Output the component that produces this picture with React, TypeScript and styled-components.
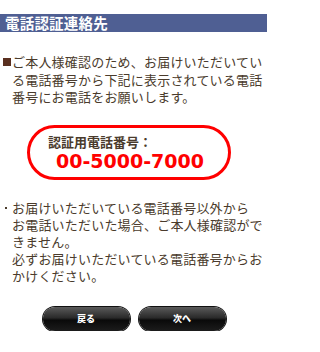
import React from 'react';
import styled, { createGlobalStyle } from 'styled-components';

const GlobalStyle = createGlobalStyle`
  body {
    margin: 0;
    background: #fff;
    font-family: "Noto Sans CJK JP", "Noto Sans", sans-serif;
    color: #4a3b2c;
  }
`;

const Page = styled.div`
  width: 267px;
  padding-top: 14px;
`;

const TitleBar = styled.h1`
  margin: 0;
  height: 18px;
  line-height: 18px;
  padding-left: 5px;
  background: #4f5f93;
  color: #fff;
  font-size: 14.5px;
  font-weight: bold;
  letter-spacing: 0.2px;
`;

const Notice = styled.div<{ $top: number }>`
  display: flex;
  align-items: flex-start;
  margin-top: ${p => p.$top}px;
  padding-left: 3px;
`;

const Square = styled.span`
  flex: none;
  width: 8px;
  height: 8px;
  margin-top: 5px;
  margin-right: 1px;
  background: #5a3020;
`;

const Dot = styled.span`
  flex: none;
  width: 2px;
  height: 2px;
  margin: 8px 5px 0 2px;
  background: #4a3b2c;
`;

const Text = styled.p<{ $lh: number }>`
  margin: 0;
  width: 253px;
  font-size: 13px;
  line-height: ${p => p.$lh}px;
  letter-spacing: 0.2px;
`;

const PhoneBox = styled.div`
  box-sizing: border-box;
  width: 204px;
  height: 55px;
  margin: 19px 0 0 27px;
  border: 3px solid #f00;
  border-radius: 28px;
  padding-top: 5px;
`;

const PhoneLabel = styled.div`
  padding-left: 18px;
  font-size: 13px;
  font-weight: bold;
  line-height: 17px;
  color: #4a3b2c;
`;

const PhoneNumber = styled.div`
  text-align: center;
  font-family: "DejaVu Sans", sans-serif;
  font-size: 19px;
  font-weight: bold;
  line-height: 22px;
  color: #f00;
  padding-left: 2px;
`;

const ButtonRow = styled.div`
  display: flex;
  justify-content: center;
  gap: 9px;
  margin-top: 23px;
  padding-left: 1px;
`;

const PillButton = styled.button`
  width: 87px;
  height: 24px;
  border: none;
  border-radius: 12px;
  background: linear-gradient(to bottom, #5a5a5a 0%, #2a2a2a 45%, #0a0a0a 55%, #1c1c1c 100%);
  box-shadow: 0 0 0 1px #111;
  color: #fff;
  font-family: "Noto Sans CJK JP", sans-serif;
  font-size: 9px;
  font-weight: 900;
  padding: 0;
  cursor: pointer;
`;

export default function App() {
  return (
    <Page>
      <GlobalStyle />
      <TitleBar>電話認証連絡先</TitleBar>
      <Notice $top={21}>
        <Square />
        <Text $lh={17.5}>
          ご本人様確認のため、お届けいただいている電話番号から下記に表示されている電話番号にお電話をお願いします。
        </Text>
      </Notice>
      <PhoneBox>
        <PhoneLabel>認証用電話番号：</PhoneLabel>
        <PhoneNumber>00-5000-7000</PhoneNumber>
      </PhoneBox>
      <Notice $top={19}>
        <Dot />
        <Text $lh={17}>
          お届けいただいている電話番号以外から
          <br />
          お電話いただいた場合、ご本人様確認ができません。
          <br />
          必ずお届けいただいている電話番号からおかけください。
        </Text>
      </Notice>
      <ButtonRow>
        <PillButton>戻る</PillButton>
        <PillButton>次へ</PillButton>
      </ButtonRow>
    </Page>
  );
}
